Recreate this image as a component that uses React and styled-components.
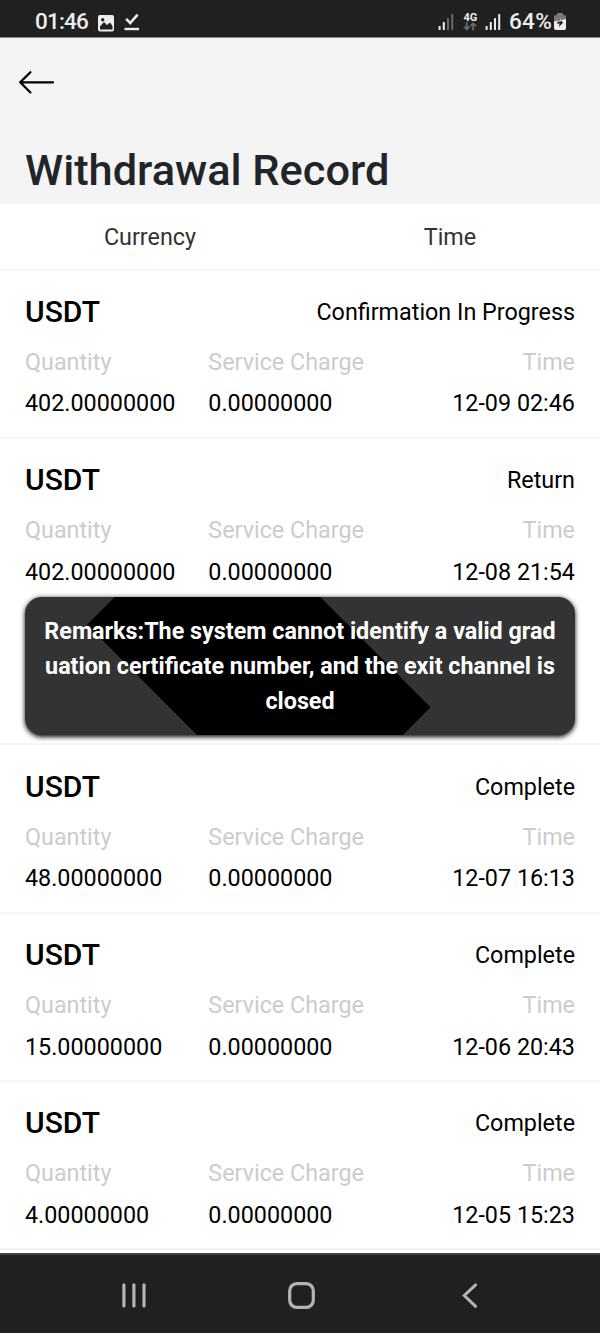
import styled, { createGlobalStyle } from "styled-components";

const GlobalStyle = createGlobalStyle`
  body {
    margin: 0;
    background: #fff;
    font-family: Roboto, "Liberation Sans", sans-serif;
  }
`;

const Screen = styled.div`
  display: flex;
  flex-direction: column;
  height: 1333px;
  width: 600px;
  overflow: hidden;
`;

const StatusBar = styled.div`
  display: flex;
  justify-content: space-between;
  height: 38px;
  padding: 0 34px 0 35px;
  background: #202020;
  border-bottom: 1px solid #8a8a8a;
  box-sizing: border-box;
  flex-shrink: 0;
`;

const StatusGroup = styled.div`
  display: flex;
  align-items: flex-start;
`;

const StatusText = styled.span`
  font-size: 22.5px;
  font-weight: 500;
  line-height: 26px;
  margin-top: 8px;
  color: #ececec;
  letter-spacing: ${({ $spacing }) => $spacing || "0"};
`;

const StatusIcon = styled.svg`
  display: block;
  margin: ${({ $margin }) => $margin};
`;

const Network = styled.div`
  display: flex;
  flex-direction: column;
  align-items: center;
  width: 14px;
  margin: 13px 8px 0 9px;
  color: #ececec;
  font-size: 11px;
  font-weight: 700;
  line-height: 9px;
`;

const Header = styled.header`
  display: flex;
  flex-direction: column;
  justify-content: space-between;
  height: 166px;
  padding: 32px 25px 8px 18px;
  box-sizing: border-box;
  background: #f4f4f4;
  flex-shrink: 0;
`;

const BackButton = styled.button`
  width: 38px;
  height: 26px;
  padding: 0;
  border: none;
  background: none;
`;

const Title = styled.h1`
  margin: 0 0 0 7px;
  font-size: 43.33px;
  font-weight: 500;
  line-height: 50px;
  color: #212529;
`;

const Columns = styled.div`
  display: flex;
  height: 66.5px;
  box-sizing: border-box;
  border-bottom: 2px solid #f5f5f5;
  flex-shrink: 0;
`;

const Column = styled.div`
  flex: 1;
  text-align: center;
  font-size: 23.33px;
  line-height: 66px;
  color: #323233;
`;

const List = styled.div`
  flex: 1;
  min-height: 0;
  overflow: hidden;
`;

const Record = styled.div`
  padding: 16.5px 25px 8.33px;
  border-bottom: 2px solid #f5f5f5;
  font-size: 23.33px;
  color: #000;
`;

const RecordTop = styled.div`
  display: flex;
  justify-content: space-between;
  height: 50px;
  margin-bottom: 4.7px;
  line-height: 50px;
`;

const Currency = styled.span`
  font-size: 30px;
  font-weight: 500;
`;

const Details = styled.div`
  display: grid;
  grid-template-columns: repeat(3, 1fr);
  grid-auto-rows: 41.67px;
  line-height: 41.67px;
  padding-bottom: 3.46px;
`;

const Label = styled.span`
  color: #ccc;
  text-align: ${({ $align }) => $align || "left"};
`;

const Value = styled.span`
  text-align: ${({ $align }) => $align || "left"};
`;

const Remark = styled.div`
  position: relative;
  height: 138.33px;
  padding: 17.5px 16.67px 15px;
  box-sizing: border-box;
  border-radius: 16.67px;
  background: #333;
  box-shadow: 0 1.67px 5px 0 rgba(0, 0, 0, 0.95);
  color: #fff;
  font-weight: 700;
  line-height: 35px;
  text-align: center;
  word-break: break-all;

  &::before {
    content: "";
    position: absolute;
    inset: 0;
    background: #000;
    clip-path: polygon(90px 0, 295px 0, 405.5px 110.5px, 378px 100%, 172px 100%, 62px 28px);
  }
`;

const RemarkText = styled.span`
  position: relative;
`;

const NavBar = styled.nav`
  display: flex;
  justify-content: space-between;
  align-items: center;
  height: 80px;
  padding: 4px 121px 0 121px;
  box-sizing: border-box;
  background: #202020;
  border-top: 2px solid #414141;
  flex-shrink: 0;
`;

const NavIcon = styled.svg`
  display: block;
  fill: none;
  stroke: #b4b4b4;
`;

const records = [
  { status: "Confirmation In Progress", quantity: "402.00000000", time: "12-09 02:46" },
  {
    status: "Return",
    quantity: "402.00000000",
    time: "12-08 21:54",
    remark:
      "Remarks:The system cannot identify a valid graduation certificate number, and the exit channel is closed",
  },
  { status: "Complete", quantity: "48.00000000", time: "12-07 16:13" },
  { status: "Complete", quantity: "15.00000000", time: "12-06 20:43" },
  { status: "Complete", quantity: "4.00000000", time: "12-05 15:23" },
];

function Signal({ level, margin }) {
  return (
    <StatusIcon width="16" height="18" $margin={margin}>
      {[4, 8, 12, 16].map((h, i) => (
        <rect
          key={h}
          x={0.6 + i * 4.2}
          y={17 - h}
          width="2"
          height={h}
          rx="0.6"
          fill={i < level ? "#ececec" : "#696969"}
        />
      ))}
    </StatusIcon>
  );
}

function RecordItem({ record }) {
  return (
    <Record>
      <RecordTop>
        <Currency>USDT</Currency>
        <span>{record.status}</span>
      </RecordTop>
      <Details>
        <Label>Quantity</Label>
        <Label>Service Charge</Label>
        <Label $align="right">Time</Label>
        <Value>{record.quantity}</Value>
        <Value>0.00000000</Value>
        <Value $align="right">{record.time}</Value>
      </Details>
      {record.remark && (
        <Remark>
          <RemarkText>{record.remark}</RemarkText>
        </Remark>
      )}
    </Record>
  );
}

function App() {
  return (
    <>
      <GlobalStyle />
      <Screen>
        <StatusBar>
          <StatusGroup>
            <StatusText $spacing="-0.8px">01:46</StatusText>
            <StatusIcon width="16" height="17" $margin="14.5px 0 0 9.5px">
              <rect width="16" height="16.5" rx="2" fill="#ececec" />
              <path d="M2 11.5l4-4.5 3 3 3-2.5 2.5 3.5v3.5H2z" fill="#202020" />
              <circle cx="4.7" cy="4.7" r="1.7" fill="#202020" />
            </StatusIcon>
            <StatusIcon width="16" height="18" $margin="13px 0 0 10px" fill="none" stroke="#ececec">
              <path d="M2.2 5.8l4 4.3L13.6 1.6" strokeWidth="2.6" />
              <path d="M0.5 16h14.5" strokeWidth="2.4" />
            </StatusIcon>
          </StatusGroup>
          <StatusGroup>
            <Signal level={2} margin="13px 0 0 0" />
            <Network>
              4G
              <svg width="14" height="9" fill="none" stroke="#6c6c6c" strokeWidth="1.7">
                <path d="M3.8 0v7M1 4.6l2.8 2.8 2.8-2.8M10.2 8.6V1.6M7.4 4.2l2.8-2.8L13 4.2" />
              </svg>
            </Network>
            <Signal level={4} margin="13px 7.5px 0 0" />
            <StatusText $spacing="0.3px">64%</StatusText>
            <StatusIcon width="12" height="18" $margin="13px 0 0 2px">
              <path d="M3 0h6v2H3zM1.5 2h9q1.5 0 1.5 1.5V9H0V3.5Q0 2 1.5 2z" fill="#777" />
              <path d="M0 8.5L12 6v9q0 2-2 2H2q-2 0-2-2z" fill="#ececec" />
              <path d="M5.5 6.5l3-1-1 3.5h2L5 14l.5-3.5h-3z" fill="#202020" />
              <path d="M4 9l3.5-4v3z" fill="#ececec" />
            </StatusIcon>
          </StatusGroup>
        </StatusBar>
        <Header>
          <BackButton aria-label="Back">
            <svg width="38" height="26" fill="none" stroke="#000" strokeWidth="2.3" strokeLinecap="round" strokeLinejoin="round">
              <path d="M35 12.3H2.5M12.4 2.2L2.2 12.3l10.2 10.2" />
            </svg>
          </BackButton>
          <Title>Withdrawal Record</Title>
        </Header>
        <Columns>
          <Column>Currency</Column>
          <Column>Time</Column>
        </Columns>
        <List>
          {records.map((record) => (
            <RecordItem key={record.time} record={record} />
          ))}
        </List>
        <NavBar>
          <NavIcon width="26" height="28" strokeWidth="3.2" strokeLinecap="round">
            <path d="M2.9 2.8v21.2M12.9 2.8v21.2M23 2.8v21.2" />
          </NavIcon>
          <NavIcon width="34" height="28" strokeWidth="3.2">
            <rect x="2.7" y="1.7" width="23.6" height="23.6" rx="7" />
          </NavIcon>
          <NavIcon width="18" height="28" strokeWidth="3" strokeLinecap="round">
            <path d="M14.6 2.8L3.3 13.5l11.3 10.8" />
          </NavIcon>
        </NavBar>
      </Screen>
    </>
  );
}

export default App;
